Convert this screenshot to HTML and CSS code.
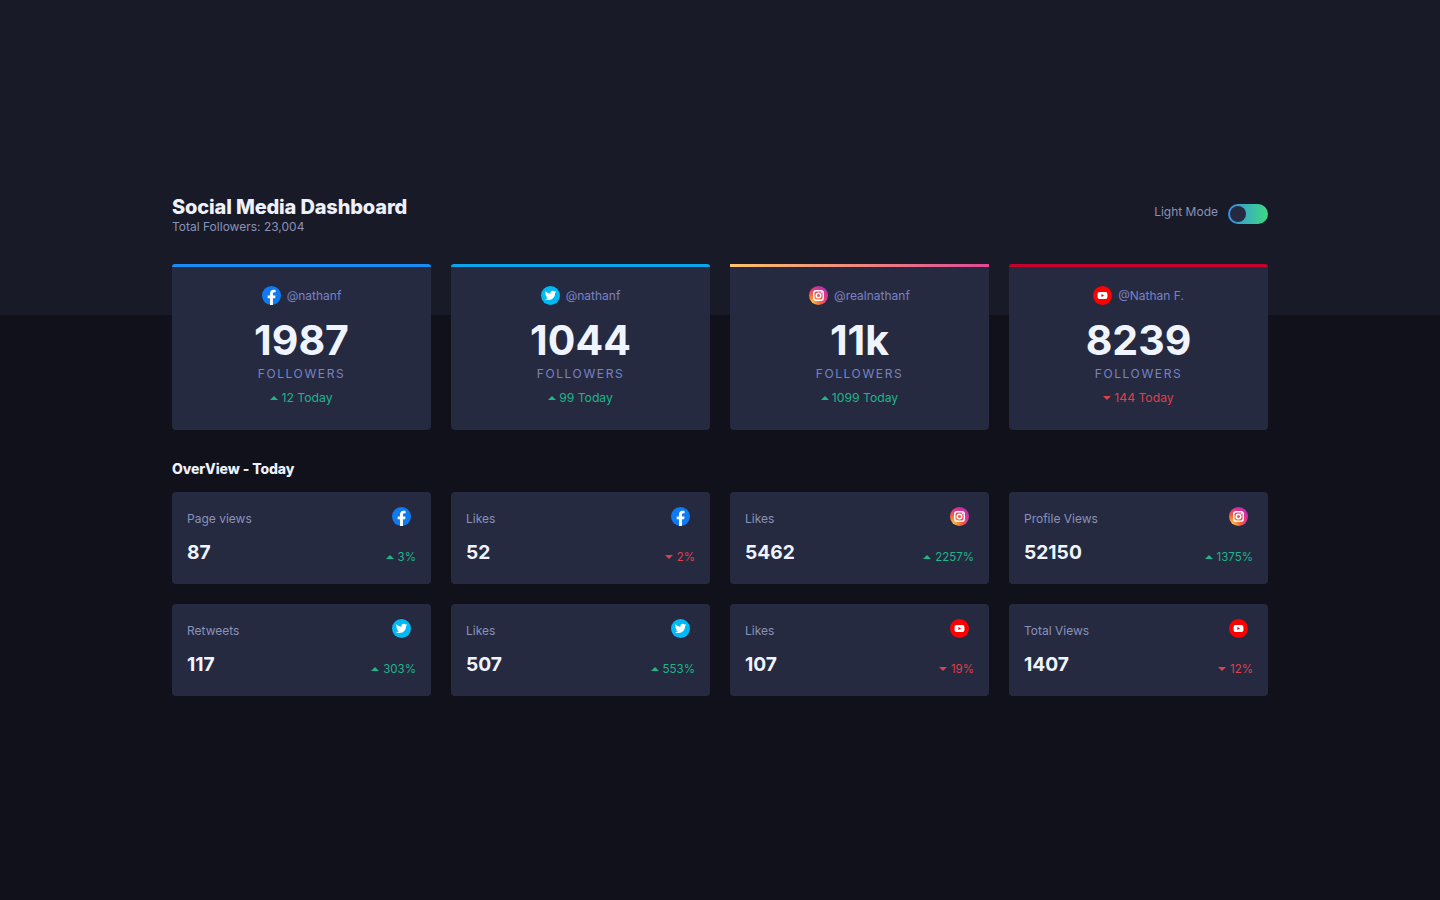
FILE: index.html
```html
<!DOCTYPE html>
<html lang="en">
<head>
  <meta charset="UTF-8" />
  <title>Social Media Dashboard</title>
  <link rel="stylesheet" href="styles.css">
</head>
<body>
  <svg class="defs" width="0" height="0" aria-hidden="true">
    <defs>
      <radialGradient id="igFill" cx="0.15" cy="0.9" r="1.15">
        <stop offset="0" stop-color="#fdc93f"/>
        <stop offset="0.4" stop-color="#f4603f"/>
        <stop offset="0.75" stop-color="#d52f9a"/>
        <stop offset="1" stop-color="#a03ac8"/>
      </radialGradient>
      <symbol id="fb" viewBox="0 0 20 20">
        <circle cx="10" cy="10" r="10" fill="#0f7bf3"/>
        <path d="M8.4 20v-7H6v-2.9h2.4V7.9c0-2.5 1.5-3.9 3.7-3.9 1.1 0 2.2.2 2.2.2v2.4h-1.2c-1.2 0-1.6.8-1.6 1.5v2h2.8l-.5 2.9h-2.3v7z" fill="#fff"/>
      </symbol>
      <symbol id="tw" viewBox="0 0 20 20">
        <circle cx="10" cy="10" r="10" fill="#00b9f5"/>
        <path d="M16 6.2c-.4.2-.9.3-1.4.4.5-.3.9-.8 1.1-1.4-.5.3-1 .5-1.6.6a2.5 2.5 0 0 0-4.2 2.3C7.900 8 6.100 7 4.800 5.500c-.7 1.200-.3 2.600.8 3.300-.4 0-.8-.1-1.100-.3 0 1.200.8 2.300 2 2.500-.4.1-.8.1-1.100 0 .3 1 1.300 1.700 2.300 1.700-1 .8-2.400 1.200-3.700 1 1.100.7 2.400 1.100 3.800 1.100 4.600 0 7.200-3.900 7-7.400.5-.3.9-.7 1.200-1.200z" fill="#fff"/>
      </symbol>
      <symbol id="ig" viewBox="0 0 20 20">
        <circle cx="10" cy="10" r="10" fill="url(#igFill)"/>
        <rect x="5" y="5" width="10" height="10" rx="2.600" fill="none" stroke="#fff" stroke-width="1.500"/>
        <circle cx="10" cy="10" r="2.400" fill="none" stroke="#fff" stroke-width="1.500"/>
        <circle cx="13" cy="7" r=".7" fill="#fff"/>
      </symbol>
      <symbol id="yt" viewBox="0 0 20 20">
        <circle cx="10" cy="10" r="10" fill="#f00"/>
        <rect x="4.800" y="6.300" width="10.400" height="7.400" rx="2" fill="#fff"/>
        <path d="M8.800 8.300v3.400l2.900-1.700z" fill="#f00"/>
      </symbol>
    </defs>
  </svg>

  <div class="page">
    <header class="top">
      <div>
        <h1>Social Media Dashboard</h1>
        <p class="total">Total Followers: 23,004</p>
      </div>
      <div class="mode">
        <span>Light Mode</span>
        <div class="switch"><div class="knob"></div></div>
      </div>
    </header>

    <section class="grid main-grid">
      <div class="card big fb">
        <div class="user"><svg class="icon"><use href="#fb"/></svg><span>@nathanf</span></div>
        <div class="count">1987</div>
        <div class="label">FOLLOWERS</div>
        <div class="today up"><i class="arrow"></i>12 Today</div>
      </div>
      <div class="card big tw">
        <div class="user"><svg class="icon"><use href="#tw"/></svg><span>@nathanf</span></div>
        <div class="count">1044</div>
        <div class="label">FOLLOWERS</div>
        <div class="today up"><i class="arrow"></i>99 Today</div>
      </div>
      <div class="card big ig">
        <div class="user"><svg class="icon"><use href="#ig"/></svg><span>@realnathanf</span></div>
        <div class="count">11k</div>
        <div class="label">FOLLOWERS</div>
        <div class="today up"><i class="arrow"></i>1099 Today</div>
      </div>
      <div class="card big yt">
        <div class="user"><svg class="icon"><use href="#yt"/></svg><span>@Nathan F.</span></div>
        <div class="count">8239</div>
        <div class="label">FOLLOWERS</div>
        <div class="today down"><i class="arrow"></i>144 Today</div>
      </div>
    </section>

    <h2>OverView - Today</h2>

    <section class="grid">
      <div class="card small">
        <div class="row"><span class="name">Page views</span><svg class="icon"><use href="#fb"/></svg></div>
        <div class="row low"><span class="num">87</span><span class="pct up"><i class="arrow"></i>3%</span></div>
      </div>
      <div class="card small">
        <div class="row"><span class="name">Likes</span><svg class="icon"><use href="#fb"/></svg></div>
        <div class="row low"><span class="num">52</span><span class="pct down"><i class="arrow"></i>2%</span></div>
      </div>
      <div class="card small">
        <div class="row"><span class="name">Likes</span><svg class="icon"><use href="#ig"/></svg></div>
        <div class="row low"><span class="num">5462</span><span class="pct up"><i class="arrow"></i>2257%</span></div>
      </div>
      <div class="card small">
        <div class="row"><span class="name">Profile Views</span><svg class="icon"><use href="#ig"/></svg></div>
        <div class="row low"><span class="num">52150</span><span class="pct up"><i class="arrow"></i>1375%</span></div>
      </div>
      <div class="card small">
        <div class="row"><span class="name">Retweets</span><svg class="icon"><use href="#tw"/></svg></div>
        <div class="row low"><span class="num">117</span><span class="pct up"><i class="arrow"></i>303%</span></div>
      </div>
      <div class="card small">
        <div class="row"><span class="name">Likes</span><svg class="icon"><use href="#tw"/></svg></div>
        <div class="row low"><span class="num">507</span><span class="pct up"><i class="arrow"></i>553%</span></div>
      </div>
      <div class="card small">
        <div class="row"><span class="name">Likes</span><svg class="icon"><use href="#yt"/></svg></div>
        <div class="row low"><span class="num">107</span><span class="pct down"><i class="arrow"></i>19%</span></div>
      </div>
      <div class="card small">
        <div class="row"><span class="name">Total Views</span><svg class="icon"><use href="#yt"/></svg></div>
        <div class="row low"><span class="num">1407</span><span class="pct down"><i class="arrow"></i>12%</span></div>
      </div>
    </section>
  </div>
</body>
</html>
```

FILE: styles.css
```css
* { box-sizing: border-box; }
html, body { margin: 0; height: 100%; }
body {
  font-family: Inter, "Liberation Sans", sans-serif;
  color: #f0f4ff;
  background: linear-gradient(#191a27 315px, #10111a 315px);
  overflow: hidden;
}
.defs { position: absolute; }
.page { width: 1096px; margin: 0 auto; padding-top: 195px; }

.top { display: flex; justify-content: space-between; align-items: flex-start; height: 69px; }
h1 { margin: 0; font-size: 20px; line-height: 25px; font-weight: 800; color: #eef0fa; letter-spacing: -0.15px; }
.total { margin: 0; font-size: 12px; line-height: 14px; color: #8a92b8; }
.mode { display: flex; align-items: center; gap: 10px; font-size: 12px; color: #8a92b8; padding-top: 9px; }
.mode span { margin-top: -6px; }
.switch {
  width: 40px; height: 20px; border-radius: 10px; padding: 2px;
  background: linear-gradient(90deg, #378fe6, #3eda82);
}
.knob { width: 16px; height: 16px; border-radius: 50%; background: #252a41; }

.grid { display: grid; grid-template-columns: repeat(4, 259px); gap: 20px; }
.card { background: #252a41; border-radius: 4px; }
.big {
  height: 166px; text-align: center; padding-top: 19px;
  border-top: 3px solid #1a8cf5; border-radius: 3px 3px 4px 4px;
}
.big.tw { border-top-color: #0ba5ec; }
.big.ig { border-image: linear-gradient(90deg, #fdc468, #df4996) 1; }
.big.yt { border-top-color: #c4002b; }

.icon { width: 19px; height: 19px; display: block; flex: none; }
.user { display: flex; justify-content: center; align-items: center; gap: 6px; height: 19px; font-size: 12px; color: #7982c4; }
.count { font-size: 41px; line-height: 50px; font-weight: 700; margin-top: 10px; color: #f0f4ff; }
.label { font-size: 12px; line-height: 15px; letter-spacing: 1.600px; color: #7982c4; margin-top: 1px; }
.today { font-size: 12.200px; line-height: 15px; margin-top: 9px; }

.up { color: #1eb589; }
.down { color: #dc414c; }
.arrow { display: inline-block; width: 0; height: 0; border-left: 4px solid transparent; border-right: 4px solid transparent; margin-right: 3px; vertical-align: 2px; }
.up .arrow { border-bottom: 4px solid #1eb589; }
.down .arrow { border-top: 4px solid #dc414c; }

h2 { margin: 0; padding-top: 30px; height: 62px; font-size: 14px; line-height: 17px; font-weight: 800; color: #eef0fa; letter-spacing: -0.1px; }

.small { height: 92px; padding: 15px 15px 0; }
.row { display: flex; justify-content: space-between; align-items: center; padding-right: 5px; height: 19px; }
.low { margin-top: 16px; padding-right: 0; height: 20px; }
.name { font-size: 12px; color: #8a92b8; padding-top: 4px; }
.num { font-size: 19.200px; font-weight: 700; color: #f0f4ff; }
.pct { font-size: 11.500px; padding-top: 9px; }
.pct .arrow { margin-right: 4px; }
```
